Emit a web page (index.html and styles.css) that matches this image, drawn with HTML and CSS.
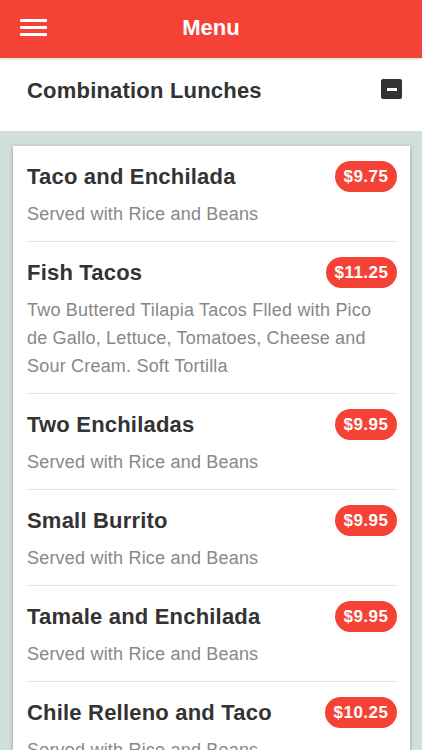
FILE: index.html
```html
<!DOCTYPE html>
<html lang="en">
<head>
    <meta charset="UTF-8">
    <meta name="viewport" content="width=device-width, initial-scale=1.0">
    <title>Menu</title>
    <link rel="stylesheet" href="styles.css">
</head>
<body>
<header class="topbar">
    <button class="menu-btn" aria-label="Open menu">
        <span></span><span></span><span></span>
    </button>
    <h1>Menu</h1>
</header>

<div class="section-head">
    <h2>Combination Lunches</h2>
    <span class="collapse-icon"></span>
</div>

<div class="content">
    <ul class="card">
        <li class="item">
            <div class="item-row">
                <h3>Taco and Enchilada</h3>
                <span class="price">$9.75</span>
            </div>
            <p>Served with Rice and Beans</p>
        </li>
        <li class="item">
            <div class="item-row">
                <h3>Fish Tacos</h3>
                <span class="price">$11.25</span>
            </div>
            <p>Two Buttered Tilapia Tacos Flled with Pico de Gallo, Lettuce, Tomatoes, Cheese and Sour Cream. Soft Tortilla</p>
        </li>
        <li class="item">
            <div class="item-row">
                <h3>Two Enchiladas</h3>
                <span class="price">$9.95</span>
            </div>
            <p>Served with Rice and Beans</p>
        </li>
        <li class="item">
            <div class="item-row">
                <h3>Small Burrito</h3>
                <span class="price">$9.95</span>
            </div>
            <p>Served with Rice and Beans</p>
        </li>
        <li class="item">
            <div class="item-row">
                <h3>Tamale and Enchilada</h3>
                <span class="price">$9.95</span>
            </div>
            <p>Served with Rice and Beans</p>
        </li>
        <li class="item">
            <div class="item-row">
                <h3>Chile Relleno and Taco</h3>
                <span class="price">$10.25</span>
            </div>
            <p>Served with Rice and Beans</p>
        </li>
    </ul>
</div>
</body>
</html>
```

FILE: styles.css
```css
body {
    font-family: "Liberation Sans", Arial, sans-serif;
    margin: 0;
    background-color: #d1e0dd;
    color: #333;
}
.topbar {
    display: flex;
    align-items: center;
    justify-content: center;
    height: 56px;
    padding-bottom: 2px;
    background-color: #f44336;
    position: relative;
    box-shadow: 0 1px 2px rgba(0, 0, 0, 0.15);
}
.topbar h1 {
    margin: 0;
    color: white;
    font-size: 22px;
    line-height: 30px;
}
.menu-btn {
    position: absolute;
    left: 20px;
    top: 19px;
    display: flex;
    flex-direction: column;
    gap: 4px;
    width: 27px;
    padding: 0;
    border: none;
    background: none;
    cursor: pointer;
}
.menu-btn span {
    display: block;
    height: 3px;
    background-color: white;
    border-radius: 1px;
}
.section-head {
    display: flex;
    align-items: center;
    justify-content: space-between;
    padding: 18px 20px 25px 27px;
    background: white;
}
.section-head h2 {
    margin: 0;
    font-size: 22px;
    line-height: 30px;
    letter-spacing: 0.2px;
}
.collapse-icon {
    display: flex;
    align-items: center;
    justify-content: center;
    width: 21px;
    height: 20px;
    margin-top: -4px;
    background-color: #333;
    border-radius: 2px;
}
.collapse-icon::before {
    content: "";
    width: 10px;
    height: 3px;
    background: white;
}
.content {
    padding: 15px 12px 0 13px;
}
.card {
    list-style: none;
    margin: 0;
    padding: 0 13px 0 14px;
    background: white;
    box-shadow: 0 1px 4px rgba(0, 0, 0, 0.3);
}
.item {
    padding: 15px 0 13px;
    border-bottom: 1px solid #e3e3e3;
}
.item-row {
    display: flex;
    align-items: center;
    justify-content: space-between;
    height: 31px;
}
.item h3 {
    margin: 0;
    font-size: 22px;
    line-height: 31px;
    letter-spacing: 0.2px;
}
.price {
    height: 31px;
    padding: 0 8.5px;
    border-radius: 16px;
    background-color: #f44336;
    color: white;
    font-weight: bold;
    font-size: 17px;
    letter-spacing: 0.5px;
    line-height: 31px;
}
.item p {
    margin: 8px 0 0;
    padding-right: 8px;
    font-size: 18px;
    line-height: 28px;
    letter-spacing: 0.2px;
    color: #888;
}
```
